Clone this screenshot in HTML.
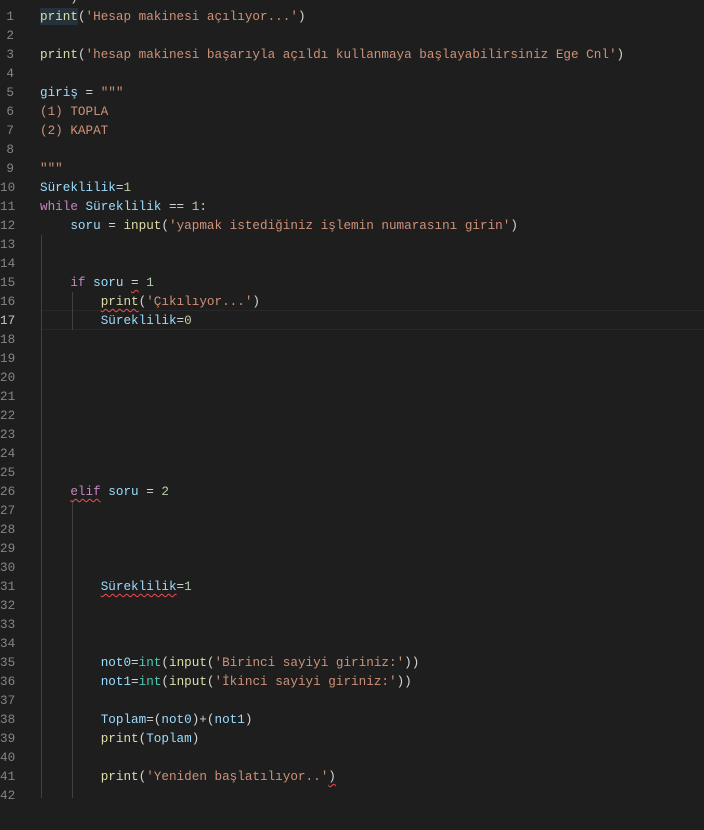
<!DOCTYPE html>
<html><head><meta charset="utf-8"><style>
html,body{margin:0;padding:0;background:#1e1e1e;width:704px;height:830px;overflow:hidden}
.ln{position:absolute;left:0;width:14px;text-align:right;color:#858585;font:12.65px/19px "Liberation Mono",monospace}
.c{position:absolute;left:40px;white-space:pre;font:12.65px/19px "Liberation Mono","DejaVu Sans Mono",monospace;color:#d4d4d4}
.f{color:#dcdcaa}.s{color:#ce9178}.v{color:#9cdcfe}.k{color:#c586c0}.n{color:#b5cea8}.t{color:#4ec9b0}
.sq{text-decoration:underline wavy #f14c4c;text-decoration-thickness:1px;text-underline-offset:3px}
.g{position:absolute;width:1px;background:#404040}
</style></head><body>
<div style="position:absolute;left:40px;top:310px;width:664px;height:18px;border-top:1px solid #282828;border-bottom:1px solid #282828"></div>
<div style="position:absolute;left:40px;top:8px;width:38px;height:17px;background:#26323a"></div>
<div class="g" style="left:41px;top:235px;height:563px"></div>
<div class="g" style="left:72px;top:292px;height:38px"></div>
<div class="g" style="left:72px;top:500px;height:298px"></div>
<div id="nums"></div>
<div class="c" style="top:-12px"><span class="f">    )</span></div>
<div class="c" style="top:7px"><span class="f">print</span>(<span class="s">'Hesap makinesi açılıyor...'</span>)</div>
<div class="c" style="top:45px"><span class="f">print</span>(<span class="s">'hesap makinesi başarıyla açıldı kullanmaya başlayabilirsiniz Ege Cnl'</span>)</div>
<div class="c" style="top:83px"><span class="v">giriş</span> = <span class="s">"""</span></div>
<div class="c" style="top:102px"><span class="s">(1) TOPLA</span></div>
<div class="c" style="top:121px"><span class="s">(2) KAPAT</span></div>
<div class="c" style="top:159px"><span class="s">"""</span></div>
<div class="c" style="top:178px"><span class="v">Süreklilik</span>=<span class="n">1</span></div>
<div class="c" style="top:197px"><span class="k">while</span> <span class="v">Süreklilik</span> == <span class="n">1</span>:</div>
<div class="c" style="top:216px">    <span class="v">soru</span> = <span class="f">input</span>(<span class="s">'yapmak istediğiniz işlemin numarasını girin'</span>)</div>
<div class="c" style="top:273px">    <span class="k">if</span> <span class="v">soru</span> <span class="sq">=</span> <span class="n">1</span></div>
<div class="c" style="top:292px">        <span class="f sq">print</span>(<span class="s">'Çıkılıyor...'</span>)</div>
<div class="c" style="top:311px">        <span class="v">Süreklilik</span>=<span class="n">0</span></div>
<div class="c" style="top:482px">    <span class="k sq">elif</span> <span class="v">soru</span> = <span class="n">2</span></div>
<div class="c" style="top:577px">        <span class="v sq">Süreklilik</span>=<span class="n">1</span></div>
<div class="c" style="top:653px">        <span class="v">not0</span>=<span class="t">int</span>(<span class="f">input</span>(<span class="s">'Birinci sayiyi giriniz:'</span>))</div>
<div class="c" style="top:672px">        <span class="v">not1</span>=<span class="t">int</span>(<span class="f">input</span>(<span class="s">'İkinci sayiyi giriniz:'</span>))</div>
<div class="c" style="top:710px">        <span class="v">Toplam</span>=(<span class="v">not0</span>)+(<span class="v">not1</span>)</div>
<div class="c" style="top:729px">        <span class="f">print</span>(<span class="v">Toplam</span>)</div>
<div class="c" style="top:767px">        <span class="f">print</span>(<span class="s">'Yeniden başlatılıyor..'</span><span class="sq">)</span></div>
<script>
var h='';for(var i=1;i<=42;i++){h+='<div class="ln" style="top:'+(7+(i-1)*19)+'px;'+(i==17?'color:#c6c6c6':'')+'">'+i+'</div>';}
document.getElementById('nums').innerHTML=h;
</script>
</body></html>
